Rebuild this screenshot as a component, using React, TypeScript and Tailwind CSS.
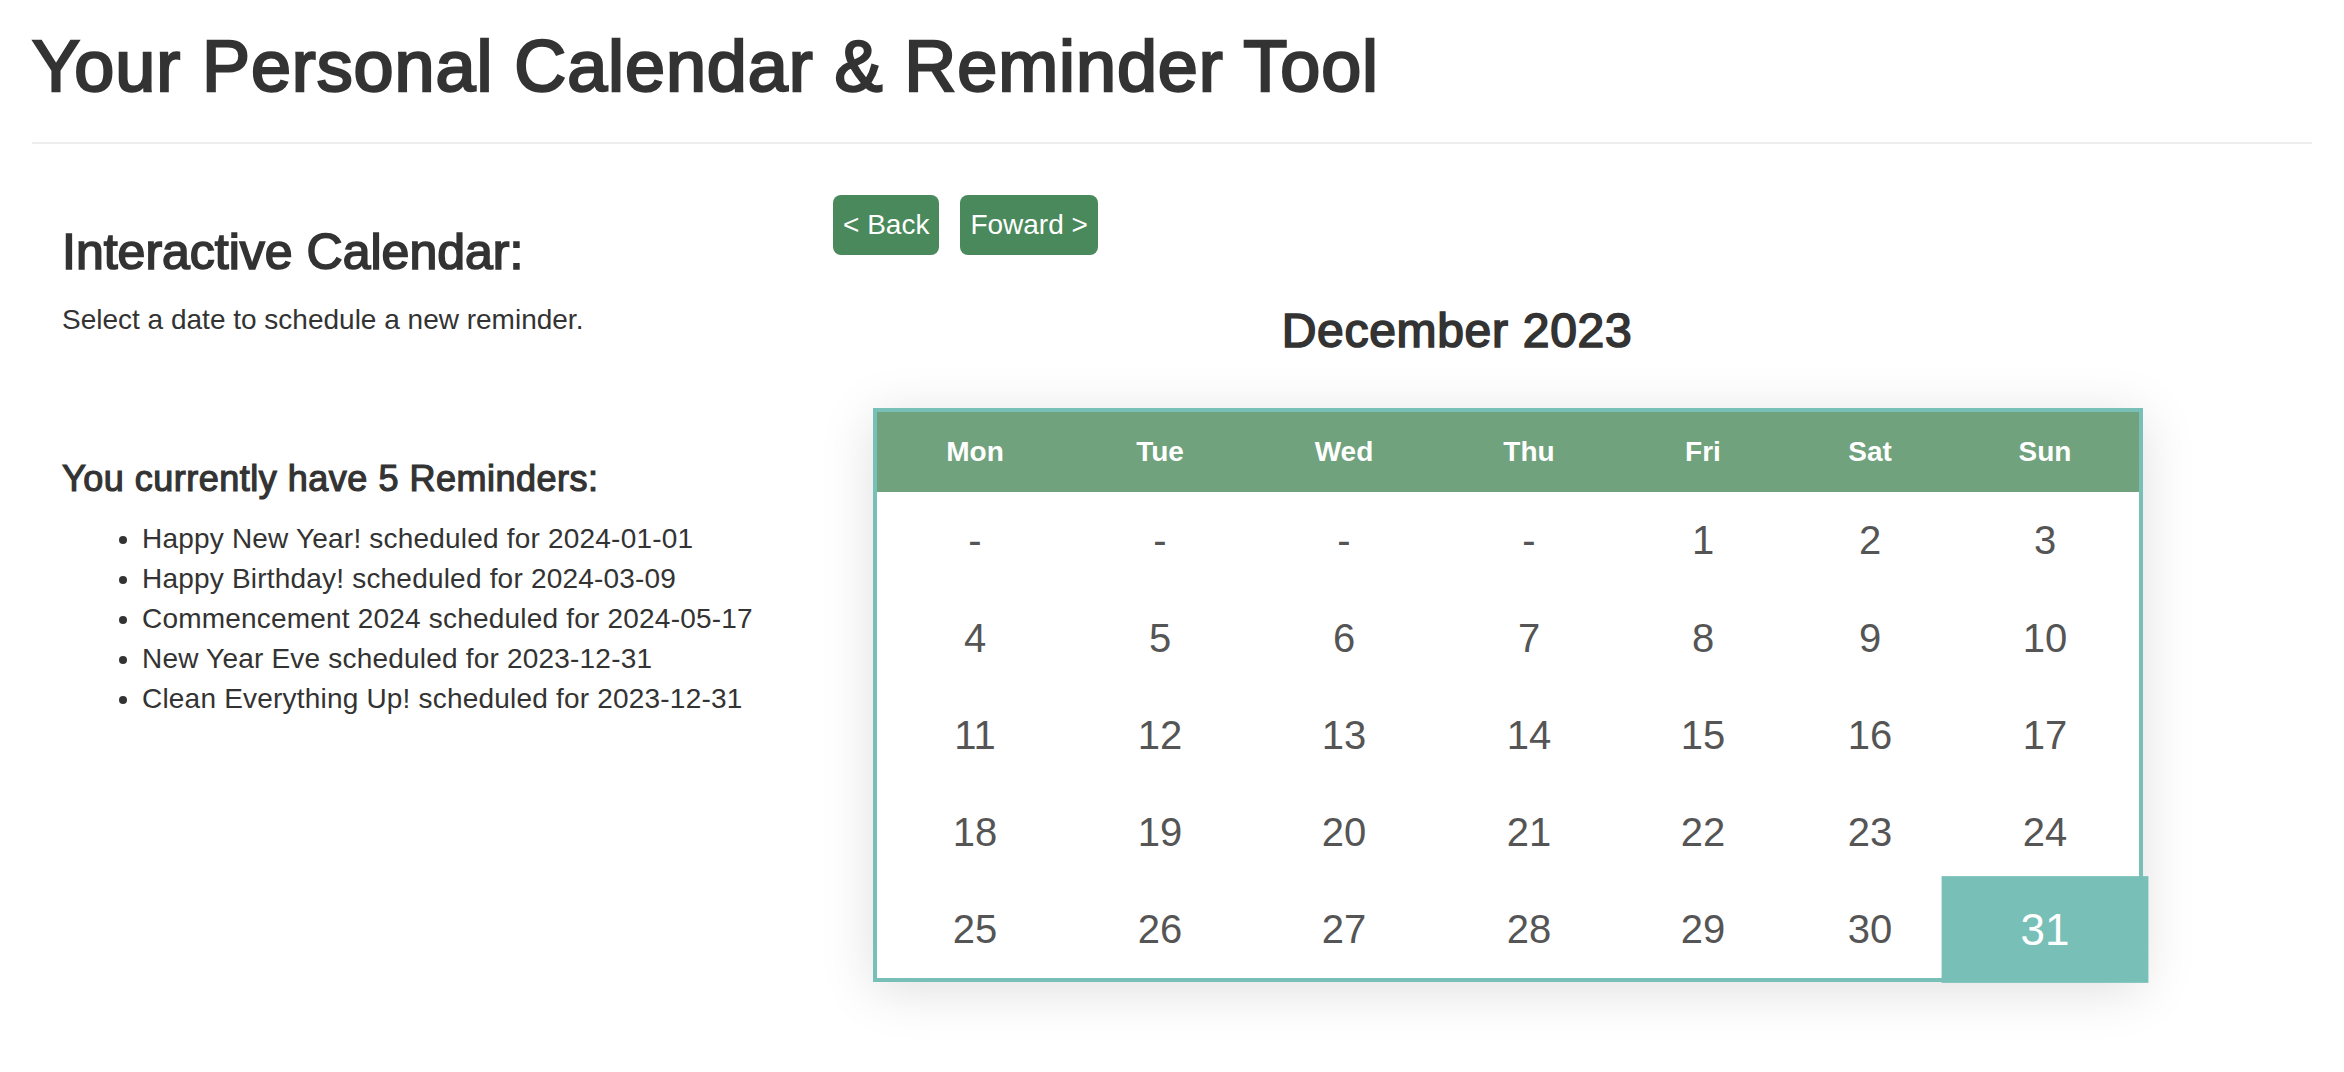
import { useState } from 'react';

interface Reminder {
  title: string;
  date: string;
}

const reminders: Reminder[] = [
  { title: 'Happy New Year!', date: '2024-01-01' },
  { title: 'Happy Birthday!', date: '2024-03-09' },
  { title: 'Commencement 2024', date: '2024-05-17' },
  { title: 'New Year Eve', date: '2023-12-31' },
  { title: 'Clean Everything Up!', date: '2023-12-31' },
];

const weekDays = ['Mon', 'Tue', 'Wed', 'Thu', 'Fri', 'Sat', 'Sun'];
const colWidths = ['w-[196px]', 'w-[174px]', 'w-[194px]', 'w-[176px]', 'w-[172px]', 'w-[162px]', 'w-[188px]'];
const monthNames = [
  'January', 'February', 'March', 'April', 'May', 'June',
  'July', 'August', 'September', 'October', 'November', 'December',
];

// weeks start on monday, empty slots shown as "-"
function buildWeeks(year: number, month: number): (number | null)[][] {
  const offset = (new Date(year, month, 1).getDay() + 6) % 7;
  const total = new Date(year, month + 1, 0).getDate();
  const cells: (number | null)[] = [];
  for (let i = 0; i < offset; i++) cells.push(null);
  for (let d = 1; d <= total; d++) cells.push(d);
  while (cells.length % 7 !== 0) cells.push(null);
  const weeks = [];
  for (let i = 0; i < cells.length; i += 7) weeks.push(cells.slice(i, i + 7));
  return weeks;
}

export default function App() {
  const [year, setYear] = useState(2023);
  const [month, setMonth] = useState(11);
  const [selected, setSelected] = useState<number | null>(31);

  const weeks = buildWeeks(year, month);

  const goBack = () => {
    if (month === 0) {
      setMonth(11);
      setYear(year - 1);
    } else setMonth(month - 1);
    setSelected(null);
  };

  const goForward = () => {
    if (month === 11) {
      setMonth(0);
      setYear(year + 1);
    } else setMonth(month + 1);
    setSelected(null);
  };

  return (
    <div className="min-h-screen bg-white px-8 font-['Liberation_Sans',Arial,sans-serif] text-[#333]">
      <h1 className="pt-[27px] text-[72px] leading-[79px] tracking-[0.9px] [-webkit-text-stroke:2.4px_#333]">
        Your Personal Calendar &amp; Reminder Tool
      </h1>
      <div className="mt-[36px] h-[2px] bg-[#eee]" />

      <div className="flex">
        <div className="w-[801px] shrink-0 pl-[30px] pt-[81px]">
          <h3 className="text-[50px] leading-[55px] [-webkit-text-stroke:1.7px_#333]">Interactive Calendar:</h3>
          <p className="mt-[20px] text-[28px] leading-[40px]">Select a date to schedule a new reminder.</p>

          <h4 className="mt-[119px] text-[36px] leading-[1.1] tracking-[0.5px] [-webkit-text-stroke:1.2px_#333]">
            You currently have {reminders.length} Reminders:
          </h4>
          <ul className="mt-[20px] list-disc pl-[80px] text-[28px] leading-[40px] tracking-[0.2px]">
            {reminders.map((r) => (
              <li key={r.title}>
                {r.title} scheduled for {r.date}
              </li>
            ))}
          </ul>
        </div>

        <div className="shrink-0 pt-[51px]">
          <div className="flex gap-[21px]">
            <button
              onClick={goBack}
              className="rounded-[8px] bg-[#4a895b] px-[10px] py-[10px] text-[28px] leading-[40px] text-white"
            >
              &lt; Back
            </button>
            <button
              onClick={goForward}
              className="rounded-[8px] bg-[#4a895b] px-[10px] py-[10px] text-[28px] leading-[40px] text-white"
            >
              Foward &gt;
            </button>
          </div>

          <h3 className="mt-[50px] w-[1248px] text-center text-[48px] leading-[1.1] tracking-[0.7px] [-webkit-text-stroke:1.7px_#333]">
            {monthNames[month]} {year}
          </h3>

          <table className="mt-[50px] ml-[40px] w-[1270px] table-fixed border-separate border-spacing-0 border-4 border-[#78bfb7] bg-white shadow-[0_8px_50px_rgba(0,0,0,0.13)]">
            <colgroup>
              {colWidths.map((w, i) => (
                <col key={i} className={w} />
              ))}
            </colgroup>
            <thead>
              <tr className="bg-[#6fa27d]">
                {weekDays.map((d) => (
                  <th key={d} className="h-[80px] p-0 text-center text-[28px] font-bold text-white">
                    {d}
                  </th>
                ))}
              </tr>
            </thead>
            <tbody>
              {weeks.map((week, wi) => (
                <tr key={wi}>
                  {week.map((day, di) => (
                    <td
                      key={di}
                      onClick={() => day && setSelected(day)}
                      className={
                        day !== null && day === selected
                          ? 'h-[97.2px] scale-110 cursor-pointer bg-[#78bfb7] p-0 text-center text-[40px] text-white'
                          : 'h-[97.2px] cursor-pointer p-0 text-center text-[40px] text-[#555]'
                      }
                    >
                      {day ?? '-'}
                    </td>
                  ))}
                </tr>
              ))}
            </tbody>
          </table>
        </div>
      </div>
    </div>
  );
}
